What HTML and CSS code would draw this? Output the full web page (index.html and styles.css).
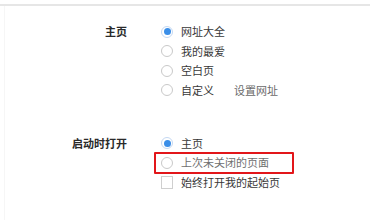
FILE: index.html
```html
<!DOCTYPE html>
<html lang="zh-CN">
<head>
<meta charset="utf-8">
<link rel="stylesheet" href="styles.css">
</head>
<body>
<div class="topbar"></div>
<div class="panel">
  <section class="group first">
    <div class="label">主页</div>
    <div class="options">
      <div class="opt"><span class="radio checked"></span><span class="text">网址大全</span></div>
      <div class="opt"><span class="radio"></span><span class="text">我的最爱</span></div>
      <div class="opt"><span class="radio"></span><span class="text">空白页</span></div>
      <div class="opt"><span class="radio"></span><span class="text">自定义</span><span class="link">设置网址</span></div>
    </div>
  </section>
  <section class="group second">
    <div class="label">启动时打开</div>
    <div class="options">
      <div class="opt"><span class="radio checked"></span><span class="text">主页</span></div>
      <div class="opt highlighted"><span class="radio"></span><span class="text muted">上次未关闭的页面</span><span class="mark"></span></div>
      <div class="opt"><span class="checkbox"></span><span class="text">始终打开我的起始页</span></div>
    </div>
  </section>
</div>
</body>
</html>
```

FILE: styles.css
```css
html, body {
  margin: 0;
  padding: 0;
  background: #ffffff;
}
body {
  width: 370px;
  height: 220px;
  overflow: hidden;
  font-family: "Noto Sans CJK SC", "Noto Sans", sans-serif;
  font-size: 11px;
  color: #333333;
}
.topbar {
  margin-top: 4px;
  height: 2px;
  background: #e6e6e6;
}
.panel {
  margin-left: 4px;
  border-left: 1px solid #f6f6f6;
  height: 214px;
}
.group {
  display: flex;
  align-items: flex-start;
}
.group.first {
  padding-top: 16px;
}
.group.second {
  margin-top: 33.5px;
}
.label {
  width: 122px;
  text-align: right;
  font-weight: bold;
  color: #2a2a2a;
  line-height: 19.5px;
}
.options {
  margin-left: 34px;
  display: flex;
  flex-direction: column;
}
.opt {
  position: relative;
  display: flex;
  align-items: center;
  height: 19.5px;
}
.radio {
  box-sizing: border-box;
  width: 12px;
  height: 12px;
  border: 1px solid #c9c9c9;
  border-radius: 50%;
  margin-right: 8px;
  display: flex;
  align-items: center;
  justify-content: center;
  background: #fff;
}
.radio.checked {
  border-color: #c4d8f2;
}
.radio.checked::after {
  content: "";
  width: 7px;
  height: 7px;
  border-radius: 50%;
  background: #3a8ee8;
}
.checkbox {
  box-sizing: border-box;
  width: 12px;
  height: 13px;
  border: 1px solid #cfcfcf;
  margin-right: 8px;
  background: #fff;
}
.text {
  line-height: 19.5px;
  color: #383838;
}
.text.muted {
  color: #6f6f6f;
}
.link {
  margin-left: 20px;
  color: #6a6a6a;
}
.mark {
  position: absolute;
  left: -7px;
  top: -1.5px;
  width: 140px;
  height: 22.5px;
  box-sizing: border-box;
  border: 2px solid #e2161a;
  border-radius: 1px;
}
```
